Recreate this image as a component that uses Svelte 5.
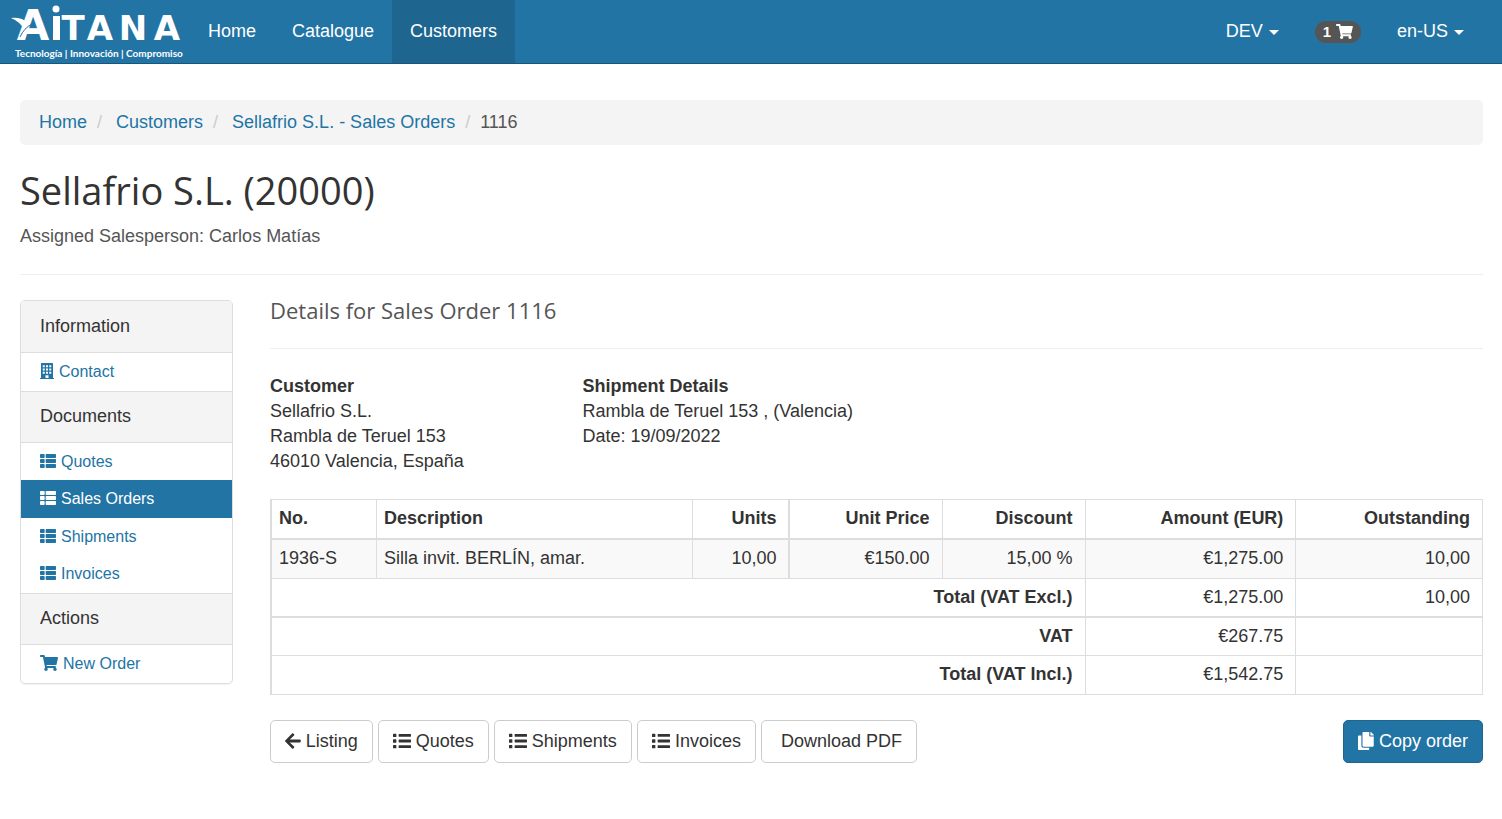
<script>
    const icons = {
        cart: {
            width: 576,
            path: 'M528.12 301.319l47.273-208C578.806 78.301 567.391 64 551.99 64H159.208l-9.166-44.81C147.758 8.021 137.93 0 126.529 0H24C10.745 0 0 10.745 0 24v16c0 13.255 10.745 24 24 24h69.883l70.248 343.435C147.325 417.1 136 435.222 136 456c0 30.928 25.072 56 56 56s56-25.072 56-56c0-15.674-6.447-29.835-16.824-40h209.647C430.447 426.165 424 440.326 424 456c0 30.928 25.072 56 56 56s56-25.072 56-56c0-22.172-12.888-41.332-31.579-50.405l5.517-24.276c3.413-15.018-8.002-29.319-23.403-29.319H218.117l-6.545-32h293.145c11.206 0 20.92-7.754 23.403-18.681z'
        },
        arrow: {
            width: 448,
            path: 'M257.5 445.1l-22.2 22.2c-9.4 9.4-24.6 9.4-33.9 0L7 273c-9.4-9.4-9.4-24.6 0-33.9L201.4 44.7c9.4-9.4 24.6-9.4 33.9 0l22.2 22.2c9.5 9.5 9.3 25-.4 34.3L136.6 216H424c13.3 0 24 10.7 24 24v32c0 13.3-10.7 24-24 24H136.6l120.5 114.8c9.8 9.3 10 24.8.4 34.3z'
        },
        thList: {
            width: 512,
            path: 'M149.333 216v80c0 13.255-10.745 24-24 24H24c-13.255 0-24-10.745-24-24v-80c0-13.255 10.745-24 24-24h101.333c13.255 0 24 10.745 24 24zM0 376v80c0 13.255 10.745 24 24 24h101.333c13.255 0 24-10.745 24-24v-80c0-13.255-10.745-24-24-24H24c-13.255 0-24 10.745-24 24zM125.333 32H24C10.745 32 0 42.745 0 56v80c0 13.255 10.745 24 24 24h101.333c13.255 0 24-10.745 24-24V56c0-13.255-10.745-24-24-24zm80 448H488c13.255 0 24-10.745 24-24v-80c0-13.255-10.745-24-24-24H205.333c-13.255 0-24 10.745-24 24v80c0 13.255 10.745 24 24 24zm-24-424v80c0 13.255 10.745 24 24 24H488c13.255 0 24-10.745 24-24V56c0-13.255-10.745-24-24-24H205.333c-13.255 0-24 10.745-24 24zm24 264H488c13.255 0 24-10.745 24-24v-80c0-13.255-10.745-24-24-24H205.333c-13.255 0-24 10.745-24 24v80c0 13.255 10.745 24 24 24z'
        },
        list: {
            width: 512,
            path: 'M80 368H16a16 16 0 0 0-16 16v64a16 16 0 0 0 16 16h64a16 16 0 0 0 16-16v-64a16 16 0 0 0-16-16zm0-320H16A16 16 0 0 0 0 64v64a16 16 0 0 0 16 16h64a16 16 0 0 0 16-16V64a16 16 0 0 0-16-16zm0 160H16a16 16 0 0 0-16 16v64a16 16 0 0 0 16 16h64a16 16 0 0 0 16-16v-64a16 16 0 0 0-16-16zm416 168H176a16 16 0 0 0-16 16v48a16 16 0 0 0 16 16h320a16 16 0 0 0 16-16v-48a16 16 0 0 0-16-16zm0-320H176a16 16 0 0 0-16 16v48a16 16 0 0 0 16 16h320a16 16 0 0 0 16-16V72a16 16 0 0 0-16-16zm0 160H176a16 16 0 0 0-16 16v48a16 16 0 0 0 16 16h320a16 16 0 0 0 16-16v-48a16 16 0 0 0-16-16z'
        },
        copy: {
            width: 448,
            path: 'M320 448v40c0 13.255-10.745 24-24 24H24c-13.255 0-24-10.745-24-24V120c0-13.255 10.745-24 24-24h72v296c0 30.879 25.121 56 56 56h168zm0-344V0H152c-13.255 0-24 10.745-24 24v368c0 13.255 10.745 24 24 24h272c13.255 0 24-10.745 24-24V128H344c-13.2 0-24-10.8-24-24zm120.971-31.029L375.029 7.029A24 24 0 0 0 358.059 0H352v96h96v-6.059a24 24 0 0 0-7.029-16.97z'
        },
        building: {
            width: 448,
            path: 'M0 476H32V16Q32 0 48 0H400Q416 0 416 16V476H448V512H0zM88 72V136H152V72zM192 72V136H256V72zM296 72V136H360V72zM88 176V240H152V176zM192 176V240H256V176zM296 176V240H360V176zM88 280V344H152V280zM192 280V344H256V280zM296 280V344H360V280zM176 392V476H272V392z'
        }
    };

    const navLinks = [
        { label: 'Home' },
        { label: 'Catalogue' },
        { label: 'Customers', active: true }
    ];

    const crumbs = ['Home', 'Customers', 'Sellafrio S.L. - Sales Orders'];

    const menu = [
        { title: 'Information', items: [{ label: 'Contact', icon: 'building' }] },
        {
            title: 'Documents',
            items: [
                { label: 'Quotes', icon: 'thList' },
                { label: 'Sales Orders', icon: 'thList', active: true },
                { label: 'Shipments', icon: 'thList' },
                { label: 'Invoices', icon: 'thList' }
            ]
        },
        { title: 'Actions', items: [{ label: 'New Order', icon: 'cart' }] }
    ];

    const lines = [
        {
            no: '1936-S',
            description: 'Silla invit. BERLÍN, amar.',
            units: '10,00',
            price: '€150.00',
            discount: '15,00 %',
            amount: '€1,275.00',
            outstanding: '10,00'
        }
    ];

    const totals = [
        { label: 'Total (VAT Excl.)', amount: '€1,275.00', outstanding: '10,00' },
        { label: 'VAT', amount: '€267.75', outstanding: '' },
        { label: 'Total (VAT Incl.)', amount: '€1,542.75', outstanding: '' }
    ];

    const links = [
        { label: 'Listing', icon: 'arrow' },
        { label: 'Quotes', icon: 'list' },
        { label: 'Shipments', icon: 'list' },
        { label: 'Invoices', icon: 'list' }
    ];
</script>

{#snippet icon(name)}
    <svg class="icon" viewBox="0 0 {icons[name].width} 512" aria-hidden="true">
        <path fill="currentColor" fill-rule="evenodd" d={icons[name].path} />
    </svg>
{/snippet}

<header class="navbar">
    <a class="brand" href="#home" aria-label="Aitana">
        <svg width="172" height="58" viewBox="0 0 172 58" fill="#fff">
            <text class="logo-initial" x="22" y="37">A</text>
            <path d="M0 15Q10 14 18 20L14 28Q10 19 0 15z" />
            <path fill="none" stroke="#2274a5" stroke-width="1" d="M9 34Q13 25 21 21" />
            <path d="M42 13h7v24h-7z" />
            <circle cx="45" cy="6" r="3.5" />
            <g class="logo-name">
                <text x="62" y="37">T</text>
                <text x="89" y="37">A</text>
                <text x="122" y="37">N</text>
                <text x="156" y="37">A</text>
            </g>
            <text class="logo-claim" x="4" y="54">Tecnología | Innovación | Compromiso</text>
        </svg>
    </a>
    <nav class="nav-links">
        {#each navLinks as link}
            <a href="#{link.label}" class:active={link.active}>{link.label}</a>
        {/each}
    </nav>
    <div class="nav-tools">
        <button type="button">DEV <span class="caret"></span></button>
        <a href="#cart" aria-label="Cart"><span class="badge">1 {@render icon('cart')}</span></a>
        <button type="button">en-US <span class="caret"></span></button>
    </div>
</header>

<div class="container">
    <ol class="breadcrumb">
        {#each crumbs as crumb}
            <li><a href="#{crumb}">{crumb}</a></li>
        {/each}
        <li>1116</li>
    </ol>

    <div class="page-header">
        <h1>Sellafrio S.L. (20000)</h1>
        <p>Assigned Salesperson: Carlos Matías</p>
    </div>

    <div class="columns">
        <aside class="panel">
            {#each menu as group}
                <h2>{group.title}</h2>
                <ul>
                    {#each group.items as item}
                        <li>
                            <a href="#{item.label}" class:active={item.active}>
                                {@render icon(item.icon)}{item.label}
                            </a>
                        </li>
                    {/each}
                </ul>
            {/each}
        </aside>

        <main>
            <h3>Details for Sales Order 1116</h3>

            <div class="details">
                <div>
                    <strong>Customer</strong><br>
                    Sellafrio S.L.<br>
                    Rambla de Teruel 153<br>
                    46010 Valencia, España
                </div>
                <div>
                    <strong>Shipment Details</strong><br>
                    Rambla de Teruel 153 , (Valencia)<br>
                    Date: 19/09/2022
                </div>
            </div>

            <table>
                <thead>
                    <tr>
                        <th class="no">No.</th>
                        <th class="description">Description</th>
                        <th class="units number">Units</th>
                        <th class="price number">Unit Price</th>
                        <th class="discount number">Discount</th>
                        <th class="amount number">Amount (EUR)</th>
                        <th class="number">Outstanding</th>
                    </tr>
                </thead>
                <tbody>
                    {#each lines as line}
                        <tr>
                            <td>{line.no}</td>
                            <td>{line.description}</td>
                            <td class="units number">{line.units}</td>
                            <td class="number">{line.price}</td>
                            <td class="number">{line.discount}</td>
                            <td class="number">{line.amount}</td>
                            <td class="number">{line.outstanding}</td>
                        </tr>
                    {/each}
                </tbody>
                <tfoot>
                    {#each totals as total}
                        <tr>
                            <th class="number" colspan="5">{total.label}</th>
                            <td class="number">{total.amount}</td>
                            <td class="number">{total.outstanding}</td>
                        </tr>
                    {/each}
                </tfoot>
            </table>

            <div class="actions">
                {#each links as link}
                    <a class="btn" href="#{link.label}">{@render icon(link.icon)}{link.label}</a>
                {/each}
                <button class="btn download" type="button">Download PDF</button>
                <button class="btn primary" type="button">{@render icon('copy')}Copy order</button>
            </div>
        </main>
    </div>
</div>

<style>
    :global(body) {
        background: #fff;
        color: #333;
        font-family: Arial, "Liberation Sans", sans-serif;
        font-size: 18px;
        line-height: 25px;
    }

    a {
        color: #2274a5;
        text-decoration: none;
    }

    button {
        font: inherit;
        cursor: pointer;
    }

    .icon {
        flex: none;
        width: auto;
        height: 1em;
        margin-bottom: 2px;
    }

    .navbar {
        display: flex;
        box-sizing: border-box;
        height: 64px;
        padding-right: 20px;
        background: #2274a5;
        border-bottom: 1px solid #19567b;
    }

    .brand {
        display: flex;
        align-items: flex-start;
        box-sizing: border-box;
        width: 190px;
        padding: 3px 0 0 11px;
    }

    .brand svg {
        overflow: visible;
    }

    .logo-initial {
        font: 700 42px "DejaVu Sans", sans-serif;
        text-anchor: middle;
    }

    .logo-name {
        font: 700 34px "DejaVu Sans", sans-serif;
        text-anchor: middle;
    }

    .logo-claim {
        font: 700 10px Lato, sans-serif;
    }

    .nav-links,
    .nav-tools {
        display: flex;
    }

    .nav-tools {
        margin-left: auto;
    }

    .nav-links a,
    .nav-tools a,
    .nav-tools button {
        display: flex;
        align-items: center;
        padding: 0 18px;
        border: 0;
        background: none;
        color: #fff;
    }

    .nav-links .active {
        background: #1e6590;
    }

    .caret {
        margin-left: 6px;
        margin-top: 2px;
        border-top: 5px solid;
        border-left: 5px solid transparent;
        border-right: 5px solid transparent;
    }

    .badge {
        display: flex;
        align-items: center;
        gap: 5px;
        height: 22px;
        padding: 0 8px;
        border-radius: 11px;
        background: #555;
        font-size: 15px;
        font-weight: 700;
    }

    .badge .icon {
        margin-bottom: 0;
    }

    .container {
        padding: 36px 19px 36px 20px;
    }

    .breadcrumb {
        display: flex;
        flex-wrap: wrap;
        margin: 0 0 20px;
        padding: 10px 19px;
        border-radius: 5px;
        background: #f4f4f4;
        color: #555;
        list-style: none;
    }

    .breadcrumb li + li::before {
        content: "/";
        padding: 0 14px 0 10px;
        color: #ccc;
    }

    .breadcrumb li:last-child::before {
        padding-right: 10px;
    }

    .page-header {
        margin-bottom: 25px;
        padding-bottom: 25px;
        border-bottom: 1px solid #eee;
    }

    h1,
    h3 {
        font-family: "Trebuchet MS", "Open Sans", sans-serif;
        font-weight: 400;
    }

    h1 {
        margin: 0;
        padding-bottom: 9px;
        font-size: 38px;
        line-height: 50px;
    }

    .page-header p {
        margin: 0;
        color: #555;
    }

    .columns {
        display: grid;
        grid-template-columns: 213px 1fr;
        gap: 37px;
        align-items: start;
    }

    .panel {
        box-sizing: border-box;
        border: 1px solid #ddd;
        border-radius: 5px;
        box-shadow: 0 1px 1px rgba(0, 0, 0, 0.05);
        overflow: hidden;
    }

    .panel h2 {
        margin: 0;
        padding: 12px 19px 13px;
        border-top: 1px solid #ddd;
        border-bottom: 1px solid #ddd;
        background: #f4f4f4;
        font-size: 18px;
        font-weight: 400;
    }

    .panel h2:first-child {
        border-top-color: #f4f4f4;
    }

    .panel ul {
        margin: 0;
        padding: 0 0 1px;
        list-style: none;
    }

    .panel li a {
        display: flex;
        align-items: center;
        gap: 5px;
        padding: 6px 19px;
        font-size: 16px;
    }

    .panel li .active {
        padding-bottom: 7px;
        background: #2274a5;
        color: #fff;
    }

    h3 {
        margin: 0 0 25px;
        padding-bottom: 27px;
        border-bottom: 1px solid #eee;
        color: #555;
        font-size: 22px;
        line-height: 21px;
    }

    .details {
        display: grid;
        grid-template-columns: repeat(4, 1fr);
        column-gap: 37px;
        margin-bottom: 25px;
    }

    .details div {
        white-space: nowrap;
    }

    table {
        width: 100%;
        table-layout: fixed;
        border-collapse: collapse;
        border-left: 2px solid #ddd;
    }

    th,
    td {
        box-sizing: border-box;
        padding: 6px 7px 7px;
        border: 1px solid #ddd;
        text-align: left;
    }

    th.number,
    td.number {
        padding-right: 12px;
        text-align: right;
    }

    thead th {
        border-bottom-width: 2px;
    }

    tbody tr {
        background: #f9f9f9;
    }

    tfoot th,
    tfoot td {
        padding-bottom: 6px;
    }

    tfoot tr:first-child > * {
        border-bottom-width: 2px;
    }

    tfoot tr:last-child > * {
        padding-bottom: 7px;
    }

    .no { width: 8.7%; }
    .description { width: 26.1%; }
    .units { width: 8%; border-right-width: 2px; }
    .price { width: 12.6%; }
    .discount { width: 11.8%; }
    .amount { width: 17.4%; }

    .actions {
        display: flex;
        flex-wrap: wrap;
        gap: 5px;
        margin-top: 25px;
    }

    .btn {
        display: flex;
        align-items: center;
        gap: 5px;
        padding: 8px 14px;
        border: 1px solid #ccc;
        border-radius: 5px;
        background: #fff;
        color: #333;
    }

    .download {
        padding-left: 19px;
    }

    .primary {
        margin-left: auto;
        border-color: #1e6590;
        background: #2274a5;
        color: #fff;
    }
</style>
